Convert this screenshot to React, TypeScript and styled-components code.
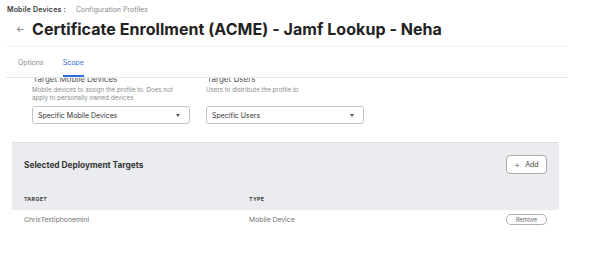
import React from "react";
import styled, { createGlobalStyle } from "styled-components";

const Global = createGlobalStyle`
  html, body { margin: 0; padding: 0; background: #fff; }
  body { font-family: Inter, "Noto Sans", "Liberation Sans", sans-serif; -webkit-font-smoothing: antialiased; }
  #root { width: 609px; height: 260px; overflow: hidden; }
  * { box-sizing: border-box; }
`;

const Page = styled.div`
  width: 609px;
  height: 260px;
  display: flex;
  flex-direction: column;
  overflow: hidden;
`;

const Header = styled.header`
  padding: 5px 0 0 7px;
  display: flex;
  flex-direction: column;
`;

const Breadcrumb = styled.div`
  font-size: 7px;
  line-height: 10px;
  display: flex;
  gap: 10px;
`;

const Crumb = styled.span<{ $strong?: boolean }>`
  color: ${(p) => (p.$strong ? "#3a3a3a" : "#8a8a8a")};
  font-weight: ${(p) => (p.$strong ? 600 : 400)};
  letter-spacing: ${(p) => (p.$strong ? "0.2px" : "0")};
`;

const TitleRow = styled.div`
  margin-top: 4px;
  display: flex;
  align-items: center;
  gap: 9px;
  padding-left: 9px;
`;

const Back = styled.span`
  font-size: 9px;
  color: #777;
  line-height: 20px;
  width: 7px;
`;

const Title = styled.h1`
  margin: 0;
  font-size: 16px;
  line-height: 20px;
  font-weight: 700;
  color: #222;
  letter-spacing: 0.05px;
`;

const Divider = styled.hr`
  margin: 7px 0 0 6px;
  width: 562px;
  border: 0;
  border-top: 1px solid #efefef;
  height: 0;
`;

const Tabs = styled.nav`
  margin-left: 6px;
  width: 562px;
  padding-left: 12px;
  display: flex;
  gap: 19px;
  border-bottom: 1px solid #e9e9e9;
`;

const Tab = styled.span<{ $active?: boolean }>`
  font-size: 7px;
  line-height: 10px;
  padding: 11px 0 7px;
  color: ${(p) => (p.$active ? "#2f6fdf" : "#8a8a8a")};
  border-bottom: 2px solid ${(p) => (p.$active ? "#2f6fdf" : "transparent")};
`;

const Scroll = styled.div`
  flex: 1;
  overflow: hidden;
`;

const Content = styled.div`
  margin-top: -4px;
`;

const Fields = styled.div`
  padding-left: 32px;
  display: grid;
  grid-template-columns: 158px 158px;
  column-gap: 16px;
`;

const Field = styled.div`
  display: flex;
  flex-direction: column;
`;

const Label = styled.div`
  font-size: 8px;
  line-height: 10px;
  color: #555;
  padding-left: 1px;
`;

const Hint = styled.div`
  margin-top: 2px;
  font-size: 6.2px;
  line-height: 7.5px;
  color: #8a8a8a;
  height: 15px;
`;

const Select = styled.div`
  margin-top: 5px;
  height: 18px;
  border: 1px solid #c4c4c4;
  border-radius: 3px;
  display: flex;
  align-items: center;
  justify-content: space-between;
  padding: 0 9px 0 5px;
  font-size: 7px;
  color: #333;
`;

const Caret = styled.span`
  width: 0;
  height: 0;
  border-left: 2px solid transparent;
  border-right: 2px solid transparent;
  border-top: 3px solid #555;
`;

const Panel = styled.section`
  margin: 18px 0 0 12px;
  width: 547px;
`;

const PanelHead = styled.div`
  background: #ebecef;
  border-top: 1px solid #dcdde1;
  padding: 12px 12px 0;
`;

const PanelTitleRow = styled.div`
  height: 19px;
  display: flex;
  align-items: center;
  justify-content: space-between;
`;

const PanelTitle = styled.h2`
  margin: 0;
  font-size: 8.3px;
  font-weight: 700;
  color: #333;
`;

const Button = styled.button<{ $small?: boolean }>`
  width: 41px;
  height: ${(p) => (p.$small ? "11px" : "19px")};
  background: #fff;
  border: 1px solid ${(p) => (p.$small ? "#b0b0b0" : "#a9a9a9")};
  border-radius: ${(p) => (p.$small ? "5px" : "4px")};
  font-family: inherit;
  font-size: ${(p) => (p.$small ? "5.6px" : "7px")};
  color: ${(p) => (p.$small ? "#666" : "#444")};
  display: flex;
  align-items: center;
  justify-content: center;
  gap: 5px;
  padding: 0;
  cursor: pointer;
`;

const Plus = styled.span`
  font-size: 9px;
  font-weight: 300;
  line-height: 1;
  color: #555;
`;

const Row = styled.div<{ $head?: boolean }>`
  display: grid;
  grid-template-columns: 225px 1fr 41px;
  align-items: center;
  padding: ${(p) => (p.$head ? "0" : "0 12px")};
  height: ${(p) => (p.$head ? "24px" : "19px")};
  margin-top: ${(p) => (p.$head ? "12px" : "0")};
`;

const HeadCell = styled.span`
  font-size: 5.3px;
  font-weight: 700;
  color: #444;
  letter-spacing: 0.3px;
  text-transform: uppercase;
  padding-top: 2px;
`;

const Cell = styled.span`
  font-size: 6.8px;
  color: #707070;
`;

export default function App() {
  return (
    <>
      <Global />
      <Page>
        <Header>
          <Breadcrumb>
            <Crumb $strong>Mobile Devices :</Crumb>
            <Crumb>Configuration Profiles</Crumb>
          </Breadcrumb>
          <TitleRow>
            <Back>←</Back>
            <Title>Certificate Enrollment (ACME) - Jamf Lookup - Neha</Title>
          </TitleRow>
        </Header>
        <Divider />
        <Tabs>
          <Tab>Options</Tab>
          <Tab $active>Scope</Tab>
        </Tabs>
        <Scroll>
          <Content>
            <Fields>
              <Field>
                <Label>Target Mobile Devices</Label>
                <Hint>Mobile devices to assign the profile to. Does not apply to personally owned devices</Hint>
                <Select>
                  <span>Specific Mobile Devices</span>
                  <Caret />
                </Select>
              </Field>
              <Field>
                <Label>Target Users</Label>
                <Hint>Users to distribute the profile to</Hint>
                <Select>
                  <span>Specific Users</span>
                  <Caret />
                </Select>
              </Field>
            </Fields>
            <Panel>
              <PanelHead>
                <PanelTitleRow>
                  <PanelTitle>Selected Deployment Targets</PanelTitle>
                  <Button>
                    <Plus>+</Plus>
                    <span>Add</span>
                  </Button>
                </PanelTitleRow>
                <Row $head>
                  <HeadCell>Target</HeadCell>
                  <HeadCell>Type</HeadCell>
                  <span />
                </Row>
              </PanelHead>
              <Row>
                <Cell>ChrisTestiphonemini</Cell>
                <Cell>Mobile Device</Cell>
                <Button $small>Remove</Button>
              </Row>
            </Panel>
          </Content>
        </Scroll>
      </Page>
    </>
  );
}
